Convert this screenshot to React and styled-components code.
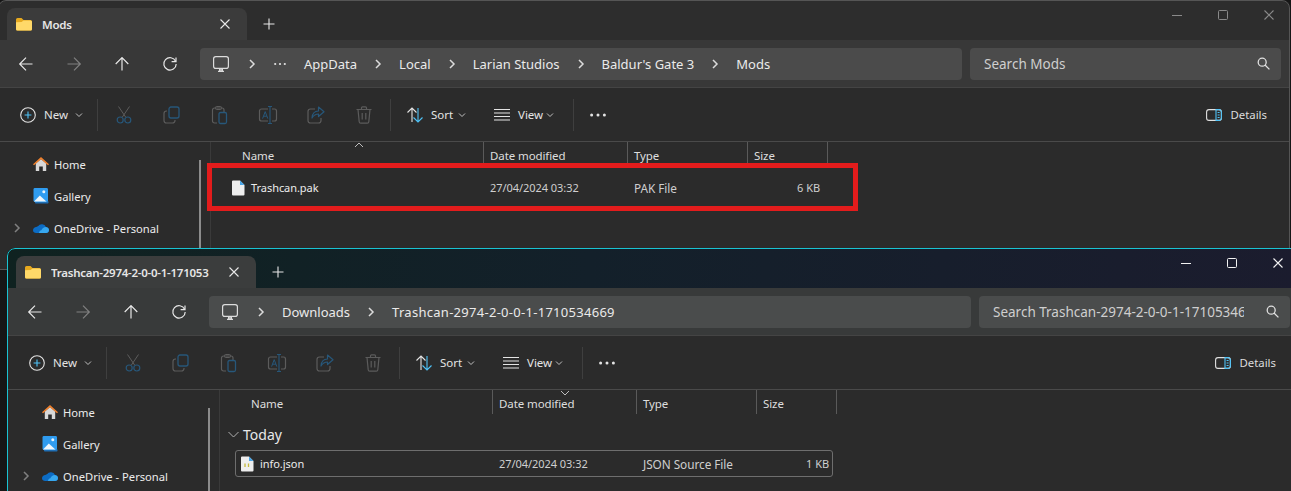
import React from 'react';
import styled, { createGlobalStyle } from 'styled-components';

const GlobalStyle = createGlobalStyle`
  html, body {
    margin: 0;
    padding: 0;
    height: 100%;
    overflow: hidden;
    background: #161616;
  }
  * {
    box-sizing: border-box;
  }
`;

const Desktop = styled.div`
  position: relative;
  width: 1291px;
  height: 491px;
  overflow: hidden;
  font-family: "Noto Sans", "Open Sans", sans-serif;
  font-size: 11.5px;
  color: #e8e8e8;
`;

const Frame = styled.div`
  position: absolute;
  left: ${(p) => p.$left}px;
  top: ${(p) => p.$top}px;
  width: 1292px;
  height: ${(p) => p.$height}px;
  display: flex;
  flex-direction: column;
  background: #2b2b2b;
  border-radius: 8px 8px 0 0;
  overflow: hidden;

  &::after {
    content: '';
    position: absolute;
    inset: 0;
    border: 1px solid ${(p) => (p.$active ? '#19c3d2' : '#555')};
    border-radius: 8px 8px 0 0;
    pointer-events: none;
  }
`;

const TitleBar = styled.div`
  height: 40px;
  flex: none;
  display: flex;
  align-items: flex-end;
  padding-left: 9px;
  background: ${(p) =>
    p.$active ? 'linear-gradient(90deg, #0f2220 0%, #13202a 45%, #1b1c2e 100%)' : '#2d2d2d'};
`;

const Tab = styled.div`
  width: 240px;
  height: 32px;
  flex: none;
  display: flex;
  align-items: center;
  padding: 0 10px 0 9px;
  border-radius: 8px 8px 0 0;
  background: ${(p) => (p.$active ? '#3b3d3d' : '#3b3b3b')};
`;

const TabTitle = styled.span`
  flex: 1;
  margin-left: 10px;
  font-size: 11.5px;
  font-weight: 600;
  letter-spacing: -0.25px;
  white-space: nowrap;
  overflow: hidden;
  color: #e6e6e6;
`;

const TabClose = styled.span`
  width: 24px;
  flex: none;
  display: flex;
  justify-content: center;
`;

const NewTab = styled.span`
  width: 40px;
  height: 32px;
  margin-left: 2px;
  display: flex;
  align-items: center;
  justify-content: center;
`;

const WindowControls = styled.div`
  margin-left: auto;
  margin-right: -2px;
  align-self: flex-start;
  display: flex;
  color: ${(p) => (p.$active ? '#f2f2f2' : '#8a8a8a')};
`;

const ControlButton = styled.span`
  width: 46px;
  height: 30px;
  display: flex;
  align-items: center;
  justify-content: center;
`;

const NavBar = styled.div`
  height: 48px;
  flex: none;
  display: flex;
  align-items: center;
  padding: 0 9px 0 4px;
  background: ${(p) => (p.$active ? '#383a3a' : '#383838')};
  border-bottom: 1px solid #444;
`;

const NavButton = styled.span`
  width: 48px;
  display: flex;
  justify-content: center;
  color: ${(p) => (p.$dim ? '#808080' : '#e8e8e8')};
`;

const AddressBar = styled.div`
  width: 762px;
  height: 32px;
  margin-left: 6px;
  display: flex;
  align-items: center;
  padding-left: 11px;
  border-radius: 4px;
  background: ${(p) => (p.$active ? '#4a4c4c' : '#4b4b4b')};
  font-size: 13px;
  color: #eaeaea;
`;

const Crumb = styled.span`
  white-space: nowrap;
  padding-top: 1px;
  letter-spacing: ${(p) => (p.$digits ? '0.28px' : '0')};
`;

const CrumbSep = styled.span`
  width: 42px;
  flex: none;
  display: flex;
  justify-content: center;
  color: #dcdcdc;
`;

const CrumbMore = styled.span`
  width: 31px;
  flex: none;
  padding-left: 1px;
  display: flex;
`;

const SearchBox = styled.div`
  width: 311px;
  height: 32px;
  margin-left: 8px;
  display: flex;
  align-items: center;
  padding: 0 11px 0 14px;
  border-radius: 4px;
  background: ${(p) => (p.$active ? '#4a4c4c' : '#4b4b4b')};
  color: #cfcfcf;
  font-size: 13.5px;
`;

const SearchText = styled.span`
  width: 251px;
  flex: none;
  white-space: nowrap;
  overflow: hidden;
`;

const SearchIcon = styled.span`
  margin-left: auto;
  display: flex;
  color: #e0e0e0;
`;

const ToolBar = styled.div`
  height: 54px;
  flex: none;
  display: flex;
  align-items: center;
  padding: 0 23px 0 12px;
  background: #2b2b2b;
  border-bottom: 1px solid #4a4a4a;
`;

const MenuButton = styled.span`
  width: ${(p) => p.$width}px;
  flex: none;
  display: flex;
  align-items: center;
  padding-left: ${(p) => p.$pad}px;
  color: #e4e4e4;
`;

const MenuLabel = styled.span`
  margin: 0 ${(p) => p.$after}px 0 ${(p) => p.$before}px;
`;

const ToolDivider = styled.span`
  width: 1px;
  height: 32px;
  flex: none;
  margin: 0 ${(p) => p.$after || 0}px 0 ${(p) => p.$before || 0}px;
  background: #3f3f3f;
`;

const IconButton = styled.span`
  width: 48px;
  flex: none;
  display: flex;
  justify-content: center;
`;

const DetailsButton = styled.span`
  margin-left: auto;
  display: flex;
  align-items: center;
  gap: 8px;
  color: #dcdcdc;
  font-size: 11.4px;
`;

const Body = styled.div`
  flex: 1;
  display: flex;
  min-height: 0;
  position: relative;
`;

const Sidebar = styled.nav`
  width: 213px;
  flex: none;
  padding-top: 6px;
  border-right: 1px solid #3a3a3a;
  position: relative;
  font-size: 11.2px;
`;

const SideScroll = styled.span`
  position: absolute;
  left: 201px;
  top: 18px;
  bottom: 0;
  width: 2px;
  background: #8c8c8c;
`;

const SideItem = styled.div`
  height: 32px;
  display: flex;
  align-items: center;
  padding-left: 13px;
  color: #ececec;
  white-space: nowrap;
`;

const SideChevron = styled.span`
  width: 22px;
  flex: none;
  display: flex;
  padding-left: 1px;
  color: #808080;
`;

const SideLabel = styled.span`
  margin-left: 5px;
`;

const Pane = styled.div`
  flex: 1;
  position: relative;
`;

const Header = styled.div`
  height: 24px;
  display: grid;
  grid-template-columns: 273px 144px 120px 80px;
  width: 617px;
  color: #dedede;
  letter-spacing: -0.1px;
`;

const HeaderCell = styled.div`
  position: relative;
  padding: 6px 0 0 ${(p) => p.$pad || 6}px;
  border-right: 1px solid #5a5a5a;
`;

const SortCaret = styled.svg`
  position: absolute;
  top: 0;
  left: ${(p) => p.$left}px;
  color: #bdbdbd;
`;

const GroupHeader = styled.div`
  height: 36px;
  display: flex;
  align-items: center;
  padding: 4px 0 0 8px;
  font-size: 14px;
  color: #e8e8e8;
`;

const GroupChevron = styled.span`
  width: 15px;
  display: flex;
  color: #b0b0b0;
`;

const FileRow = styled.div`
  width: 598px;
  height: 27px;
  margin: ${(p) => (p.$first ? '8px' : '0')} 0 0 15px;
  display: grid;
  grid-template-columns: 263px 144px 120px 70px;
  align-items: center;
  border: 1px solid ${(p) => (p.$selected ? '#6e6e6e' : 'transparent')};
  border-radius: 3px;
  color: #cfcfcf;
  font-size: 11px;
  letter-spacing: -0.05px;
`;

const NameCell = styled.div`
  display: flex;
  align-items: center;
  gap: 5px;
  padding-left: 3px;
  color: #ececec;
`;

const TypeCell = styled.div`
  font-size: 11.8px;
`;

const SizeCell = styled.div`
  text-align: right;
  padding-right: 4px;
`;

const Highlight = styled.div`
  position: absolute;
  left: 207px;
  top: 163px;
  width: 651px;
  height: 48px;
  border: 5px solid #e31c1c;
`;

const Svg = ({ size = 16, box = 16, children, ...rest }) => (
  <svg width={size} height={size} viewBox={`0 0 ${box} ${box}`} fill="none" stroke="currentColor" {...rest}>
    {children}
  </svg>
);

const Folder = () => (
  <Svg stroke="none">
    <path d="M0 3.5A1.5 1.5 0 0 1 1.5 2h4l2 2h7A1.5 1.5 0 0 1 16 5.5V13a1.5 1.5 0 0 1-1.5 1.5h-13A1.5 1.5 0 0 1 0 13z" fill="#e6a91f" />
    <path d="M0 6.2 5.6 6 7.5 4.6h7A1.5 1.5 0 0 1 16 6.1V13a1.5 1.5 0 0 1-1.5 1.5h-13A1.5 1.5 0 0 1 0 13z" fill="#ffd969" />
  </Svg>
);
const CloseX = ({ size = 12 }) => (
  <Svg size={size} box={12} strokeWidth="1.1"><path d="M1.5 1.5l9 9M10.5 1.5l-9 9" /></Svg>
);
const Plus = () => (
  <Svg size={12} box={12} strokeWidth="1.1"><path d="M6 .5v11M.5 6h11" /></Svg>
);
const Minimize = () => <Svg size={12} box={12}><path d="M1 6.5h10" /></Svg>;
const Maximize = () => <Svg size={12} box={12}><rect x="1.5" y="1.5" width="9" height="9" rx="1" /></Svg>;
const ArrowLeft = () => (
  <Svg strokeWidth="1.2"><path d="M14.5 8H2M8 1.7 1.7 8 8 14.3" /></Svg>
);
const ArrowRight = () => (
  <Svg strokeWidth="1.2"><path d="M1.5 8H14M8 1.7 14.3 8 8 14.3" /></Svg>
);
const ArrowUp = () => (
  <Svg strokeWidth="1.2"><path d="M8 14.5V2M1.7 8 8 1.7 14.3 8" /></Svg>
);
const Refresh = () => (
  <Svg strokeWidth="1.2">
    <path d="M13.6 5.2A6.2 6.2 0 1 0 14.2 8" />
    <path d="M9.6 5.6h4.4V1.4" />
  </Svg>
);
const Monitor = () => (
  <Svg size={20} box={20} strokeWidth="1.2" style={{ color: '#dcdcdc' }}>
    <rect x="2.6" y="2.6" width="14.8" height="11.8" rx="2.2" />
    <path d="M7 17.4h6M10 14.6v2.6M8.6 15v2.2M11.4 15v2.2" />
  </Svg>
);
const Chevron = () => (
  <Svg size={10} box={10} strokeWidth="1.5"><path d="M3 1l4 4-4 4" /></Svg>
);
const CrumbDots = () => (
  <Svg size={12} box={12} stroke="none" fill="#e4e4e4">
    <circle cx="1.2" cy="6" r="1.1" /><circle cx="6" cy="6" r="1.1" /><circle cx="10.8" cy="6" r="1.1" />
  </Svg>
);
const MoreDots = () => (
  <Svg stroke="none" fill="#e4e4e4">
    <circle cx="1.6" cy="8" r="1.5" /><circle cx="8" cy="8" r="1.5" /><circle cx="14.4" cy="8" r="1.5" />
  </Svg>
);
const Search = () => (
  <Svg size={13} box={13} strokeWidth="1.3">
    <circle cx="5.2" cy="5.2" r="4" /><path d="M8 8l4.4 4.4" />
  </Svg>
);
const NewIcon = () => (
  <Svg strokeWidth="1.1">
    <circle cx="8" cy="8" r="7.3" stroke="#e4e4e4" />
    <path d="M8 4.6v6.8M4.6 8h6.8" stroke="#4fc3f7" />
  </Svg>
);
const DropChevron = () => (
  <Svg size={8} box={8} style={{ color: '#c0c0c0' }}><path d="M1 2.5l3 3 3-3" /></Svg>
);

const BLUE = '#27577a';
const GREY = '#5c5c5c';

const Cut = () => (
  <Svg size={20} box={20}>
    <path d="M4.5 1.5 11.6 12M15.5 1.5 8.4 12" stroke={GREY} />
    <circle cx="6.2" cy="15" r="3" stroke={BLUE} strokeWidth="1.2" />
    <circle cx="13.8" cy="15" r="3" stroke={BLUE} strokeWidth="1.2" />
  </Svg>
);
const Copy = () => (
  <Svg size={20} box={20}>
    <path d="M5 6H4.5A2.5 2.5 0 0 0 2 8.5v7A2.5 2.5 0 0 0 4.5 18h6a2.5 2.5 0 0 0 2.5-2.5V15" stroke={GREY} strokeWidth="1.2" />
    <rect x="7" y="2" width="10" height="11" rx="2" stroke={BLUE} strokeWidth="1.3" />
  </Svg>
);
const Paste = () => (
  <Svg size={20} box={20}>
    <path d="M7 18H4.5A2 2 0 0 1 2.5 16V5A2 2 0 0 1 4.5 3H12A2 2 0 0 1 14 5v2" stroke={GREY} strokeWidth="1.2" />
    <rect x="5.5" y="1.5" width="6" height="3" rx="1" stroke={GREY} />
    <rect x="9" y="7.5" width="7.5" height="11" rx="1.5" stroke={BLUE} strokeWidth="1.3" />
  </Svg>
);
const Rename = () => (
  <Svg size={20} box={20}>
    <path d="M10 4H3.5A2 2 0 0 0 1.5 6v8a2 2 0 0 0 2 2H10M14 4h2.5a2 2 0 0 1 2 2v8a2 2 0 0 1-2 2H14" stroke={GREY} strokeWidth="1.2" />
    <path d="M4.6 13.6 7.2 6.6l2.6 7M5.6 11.2h3.2" stroke={BLUE} />
    <path d="M12 2v16M10 1.5h4M10 18.5h4" stroke={BLUE} strokeWidth="1.1" />
  </Svg>
);
const Share = () => (
  <Svg size={20} box={20}>
    <path d="M9 4H4.5A2.5 2.5 0 0 0 2 6.5v9A2.5 2.5 0 0 0 4.5 18h8a2.5 2.5 0 0 0 2.5-2.5V13" stroke={GREY} strokeWidth="1.2" />
    <path d="M12.5 2 18 6.8 12.5 11.5V9C9.500 9 7.500 10.500 6 13c.3-4.200 2.800-7 6.500-7z" stroke={BLUE} strokeWidth="1.2" strokeLinejoin="round" />
  </Svg>
);
const Trash = () => (
  <Svg size={20} box={20} stroke={GREY} strokeWidth="1.2">
    <path d="M2.5 4.5h15M7.5 4.5V2.8a1 1 0 0 1 1-1h3a1 1 0 0 1 1 1v1.7M4 4.5l1.2 12.3a1.5 1.5 0 0 0 1.5 1.4h6.6a1.5 1.5 0 0 0 1.5-1.4L16 4.5M8.2 8v6.5M11.8 8v6.5" />
  </Svg>
);
const SortIcon = () => (
  <Svg size={18} box={18} strokeWidth="1.1">
    <path d="M6 16V2M1.5 6.5 6 2l4.5 4.5" stroke="#e4e4e4" />
    <path d="M12 2v14M7.5 11.5 12 16l4.500-4.500" stroke="#4fc3f7" />
  </Svg>
);
const ViewIcon = () => (
  <Svg size={18} box={18} strokeWidth="1" style={{ color: '#e4e4e4' }}>
    <path d="M1 3.500h16M1 7h16M1 10.500h16M1 14h16" />
  </Svg>
);
const DetailsIcon = () => (
  <Svg strokeWidth="1.1">
    <rect x=".6" y="2.6" width="14.8" height="10.8" rx="2.4" stroke="#e0e0e0" />
    <path d="M10 2.6h3a2.4 2.4 0 0 1 2.4 2.4v6a2.4 2.4 0 0 1-2.4 2.4h-3z" stroke="#4fc3f7" />
    <path d="M11.6 5.5h2M11.6 8h2M11.6 10.5h2" stroke="#4fc3f7" />
  </Svg>
);
const Home = () => (
  <Svg stroke="none">
    <path d="M2.8 7.4 8 3l5.2 4.4V15H9.800v-4.400H6.200V15H2.800z" fill="#d8d8d8" />
    <path d="M0 8.2 8 1l8 7.200-1 1.100L8 3.200 1 9.300z" fill="#f0802c" />
  </Svg>
);
const Gallery = () => (
  <Svg stroke="none">
    <rect x="2" y="13" width="13.5" height="2.6" rx=".8" fill="#1f6fb5" />
    <rect x=".5" y="0" width="14.5" height="14" rx="1.4" fill="#2f9cf0" />
    <path d="M1 13.600 6.800 7.400l6.600 6.200z" fill="#eef6fc" />
    <circle cx="10.8" cy="3.8" r="1.5" fill="#e8f4fc" />
  </Svg>
);
const OneDrive = () => (
  <Svg stroke="none">
    <path d="M5 6.200A4.600 4.600 0 0 1 13 7c1.700.3 3 1.400 3 3 0 1.800-1.400 3-3.200 3H3.200C1.400 13 0 12 0 10.200 0 8.400 1.600 7 3.300 7c.6-.4 1.100-.7 1.700-.8z" fill="#0c6cc4" />
    <path d="M6 13h7c1.700 0 3-1.200 3-3 0-1.500-1.200-2.700-3-3-2.200 0-4 1.400-4.600 3.200C7 10.500 6 11.600 6 13z" fill="#37a7ee" />
  </Svg>
);
const FileIcon = ({ json }) => (
  <Svg stroke="none">
    <path d="M2 1.500A1 1 0 0 1 3 .5h7L14.500 5v9.500a1 1 0 0 1-1 1H3a1 1 0 0 1-1-1z" fill="#eeeeee" />
    <path d="M10 .5 14.500 5H10z" fill="#49a5e6" />
    {json && <path d="M6 7.500v3.500M9.500 7.500v3.500" stroke="#c3b93c" strokeWidth="1.3" />}
  </Svg>
);
const Caret = ({ left, down }) => (
  <SortCaret $left={left} width="10" height="6" viewBox="0 0 10 6" fill="none" stroke="currentColor">
    <path d={down ? 'M1 1l4 4 4-4' : 'M1 5l4-4 4 4'} />
  </SortCaret>
);

const FileWindow = ({ left, top, height, active, title, crumbs, collapsed, search, sortDown, children }) => (
  <Frame $left={left} $top={top} $height={height} $active={active}>
    <TitleBar $active={active}>
      <Tab $active={active}>
        <Folder />
        <TabTitle>{title}</TabTitle>
        <TabClose><CloseX /></TabClose>
      </Tab>
      <NewTab><Plus /></NewTab>
      <WindowControls $active={active}>
        <ControlButton><Minimize /></ControlButton>
        <ControlButton><Maximize /></ControlButton>
        <ControlButton><CloseX /></ControlButton>
      </WindowControls>
    </TitleBar>

    <NavBar $active={active}>
      <NavButton><ArrowLeft /></NavButton>
      <NavButton $dim><ArrowRight /></NavButton>
      <NavButton><ArrowUp /></NavButton>
      <NavButton><Refresh /></NavButton>
      <AddressBar $active={active}>
        <Monitor />
        <CrumbSep><Chevron /></CrumbSep>
        {collapsed && <CrumbMore><CrumbDots /></CrumbMore>}
        {crumbs.map((c, i) => (
          <React.Fragment key={c}>
            {i > 0 && <CrumbSep><Chevron /></CrumbSep>}
            <Crumb $digits={c.length > 20}>{c}</Crumb>
          </React.Fragment>
        ))}
      </AddressBar>
      <SearchBox $active={active}>
        <SearchText>{search}</SearchText>
        <SearchIcon><Search /></SearchIcon>
      </SearchBox>
    </NavBar>

    <ToolBar>
      <MenuButton $width={87} $pad={10}>
        <NewIcon />
        <MenuLabel $before={8} $after={7}>New</MenuLabel>
        <DropChevron />
      </MenuButton>
      <ToolDivider $after={2} />
      <IconButton><Cut /></IconButton>
      <IconButton><Copy /></IconButton>
      <IconButton><Paste /></IconButton>
      <IconButton><Rename /></IconButton>
      <IconButton><Share /></IconButton>
      <IconButton><Trash /></IconButton>
      <ToolDivider $before={2} />
      <MenuButton $width={87} $pad={15}>
        <SortIcon />
        <MenuLabel $before={7} $after={5}>Sort</MenuLabel>
        <DropChevron />
      </MenuButton>
      <MenuButton $width={95} $pad={15}>
        <ViewIcon />
        <MenuLabel $before={7} $after={3}>View</MenuLabel>
        <DropChevron />
      </MenuButton>
      <ToolDivider />
      <IconButton><MoreDots /></IconButton>
      <DetailsButton>
        <DetailsIcon />
        Details
      </DetailsButton>
    </ToolBar>

    <Body>
      <Sidebar>
        <SideScroll />
        <SideItem><SideChevron /><Home /><SideLabel>Home</SideLabel></SideItem>
        <SideItem><SideChevron /><Gallery /><SideLabel>Gallery</SideLabel></SideItem>
        <SideItem>
          <SideChevron><Chevron /></SideChevron>
          <OneDrive />
          <SideLabel>OneDrive - Personal</SideLabel>
        </SideItem>
      </Sidebar>
      <Pane>
        <Header>
          <HeaderCell $pad={31}>
            Name
            {!sortDown && <Caret left={143} />}
          </HeaderCell>
          <HeaderCell>
            Date modified
            {sortDown && <Caret left={67} down />}
          </HeaderCell>
          <HeaderCell>Type</HeaderCell>
          <HeaderCell>Size</HeaderCell>
        </Header>
        {children}
      </Pane>
    </Body>
  </Frame>
);

const App = () => (
  <Desktop>
    <GlobalStyle />
    <FileWindow
      left={-2}
      top={0}
      height={270}
      title="Mods"
      collapsed
      crumbs={['AppData', 'Local', 'Larian Studios', "Baldur's Gate 3", 'Mods']}
      search="Search Mods"
    >
      <FileRow $first>
        <NameCell><FileIcon />Trashcan.pak</NameCell>
        <div>27/04/2024 03:32</div>
        <TypeCell>PAK File</TypeCell>
        <SizeCell>6 KB</SizeCell>
      </FileRow>
    </FileWindow>
    <Highlight />
    <FileWindow
      left={7}
      top={248}
      height={260}
      active
      title="Trashcan-2974-2-0-0-1-171053"
      crumbs={['Downloads', 'Trashcan-2974-2-0-0-1-1710534669']}
      search="Search Trashcan-2974-2-0-0-1-1710534669"
      sortDown
    >
      <GroupHeader>
        <GroupChevron>
          <Svg size={11} box={11}><path d="M.5 3l5 5 5-5" /></Svg>
        </GroupChevron>
        Today
      </GroupHeader>
      <FileRow $selected>
        <NameCell><FileIcon json />info.json</NameCell>
        <div>27/04/2024 03:32</div>
        <TypeCell>JSON Source File</TypeCell>
        <SizeCell>1 KB</SizeCell>
      </FileRow>
    </FileWindow>
  </Desktop>
);

export default App;
